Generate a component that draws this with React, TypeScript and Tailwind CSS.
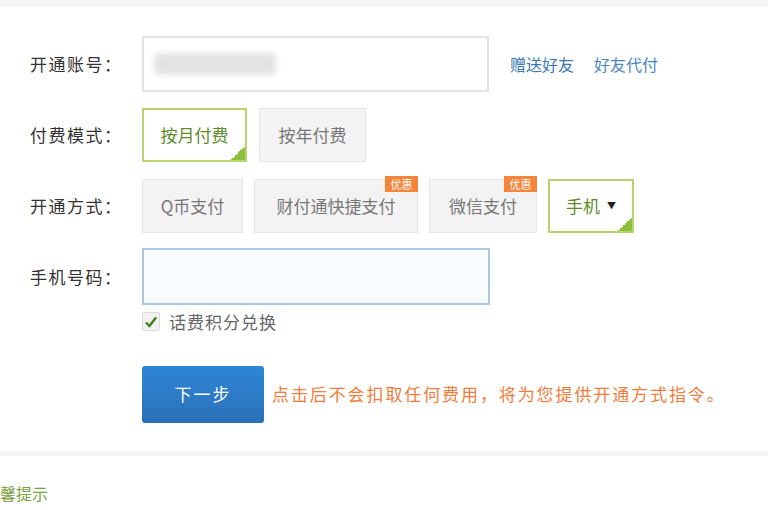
import type { ReactNode } from "react";

const font = { fontFamily: '"Microsoft YaHei", "Noto Sans CJK SC", sans-serif' };

function Label({ children }: { children: ReactNode }) {
  return (
    <div className="w-[112px] shrink-0 text-[17px] tracking-[1.5px] text-[#333]">
      {children}
    </div>
  );
}

function Option({
  label,
  width,
  active,
  badge,
  caret,
}: {
  label: string;
  width: string;
  active?: boolean;
  badge?: boolean;
  caret?: boolean;
}) {
  return (
    <div
      className={`relative flex h-[54px] items-center justify-center text-[17px] ${width} ${
        active
          ? "border-2 border-[#b7d46f] bg-white text-[#5d8c2c]"
          : "border border-[#e6e6e6] bg-[#f3f3f3] text-[#777]"
      }`}
    >
      {label}
      {caret && <span className="ml-[7px] text-[9px] text-[#222]">▼</span>}
      {active && (
        <span className="absolute right-0 bottom-0 h-[14px] w-[14px] bg-[linear-gradient(135deg,transparent_50%,#8cbf3c_50%)]" />
      )}
      {badge && (
        <span className="absolute -top-[4px] -right-[1px] flex h-[16px] w-[33px] items-center justify-center bg-[#f5853a] text-[11px] leading-none text-white">
          优惠
        </span>
      )}
    </div>
  );
}

export default function App() {
  return (
    <div className="relative h-[510px] w-[768px] overflow-hidden bg-white" style={font}>
      <div className="h-[7px] bg-[#f4f4f4]" />

      <div className="pl-[30px]">
        {/* account */}
        <div className="mt-[29px] flex items-center">
          <Label>开通账号：</Label>
          <div className="flex h-[56px] w-[347px] items-center border-2 border-[#e4e4e4] bg-white pl-[10px]">
            <div className="h-[22px] w-[122px] rounded-sm bg-[#e3e3e3] blur-[3px]" />
          </div>
          <a className="ml-[21px] text-[16px] text-[#3a77b6]">赠送好友</a>
          <a className="ml-[20px] text-[16px] text-[#4a86c2]">好友代付</a>
        </div>

        {/* pay mode */}
        <div className="mt-[16px] flex items-center">
          <Label>付费模式：</Label>
          <div className="flex gap-[12px]">
            <Option label="按月付费" width="w-[105px]" active />
            <Option label="按年付费" width="w-[107px]" />
          </div>
        </div>

        {/* method */}
        <div className="mt-[17px] flex items-center">
          <Label>开通方式：</Label>
          <div className="flex gap-[11px]">
            <Option label="Q币支付" width="w-[101px]" />
            <Option label="财付通快捷支付" width="w-[164px]" badge />
            <Option label="微信支付" width="w-[108px]" badge />
            <Option label="手机" width="w-[86px]" active caret />
          </div>
        </div>

        {/* phone */}
        <div className="mt-[15px] flex items-center">
          <Label>手机号码：</Label>
          <div className="h-[57px] w-[348px] border-2 border-[#a9c9e2] bg-[#f9fcff]" />
        </div>

        <div className="mt-[4px] ml-[112px] flex items-center">
          <span className="flex h-[19px] w-[18px] items-center justify-center rounded-[2px] border border-[#dcdcdc] bg-[#f1f1f1]">
            <svg width="14" height="14" viewBox="0 0 14 14">
              <path d="M2 7.5 L5.5 11 L12 2.5" fill="none" stroke="#3f7d1e" strokeWidth="2.4" />
            </svg>
          </span>
          <span className="ml-[9px] text-[17px] tracking-[1px] text-[#666]">话费积分兑换</span>
        </div>

        <div className="mt-[31px] ml-[112px] flex items-center">
          <button className="h-[57px] w-[122px] rounded-[3px] bg-[linear-gradient(#2f86d6,#2a70b8)] text-[17px] tracking-[2px] text-white">
            下一步
          </button>
          <span className="ml-[8px] text-[17px] tracking-[1.9px] text-[#f27c3b]">
            点击后不会扣取任何费用，将为您提供开通方式指令。
          </span>
        </div>
      </div>

      <div className="mt-[28px] h-[5px] bg-[#f4f4f4]" />

      <div className="mt-[25px] -ml-[16px] text-[16px] leading-[24px] text-[#7aa23f]">温馨提示</div>
    </div>
  );
}
